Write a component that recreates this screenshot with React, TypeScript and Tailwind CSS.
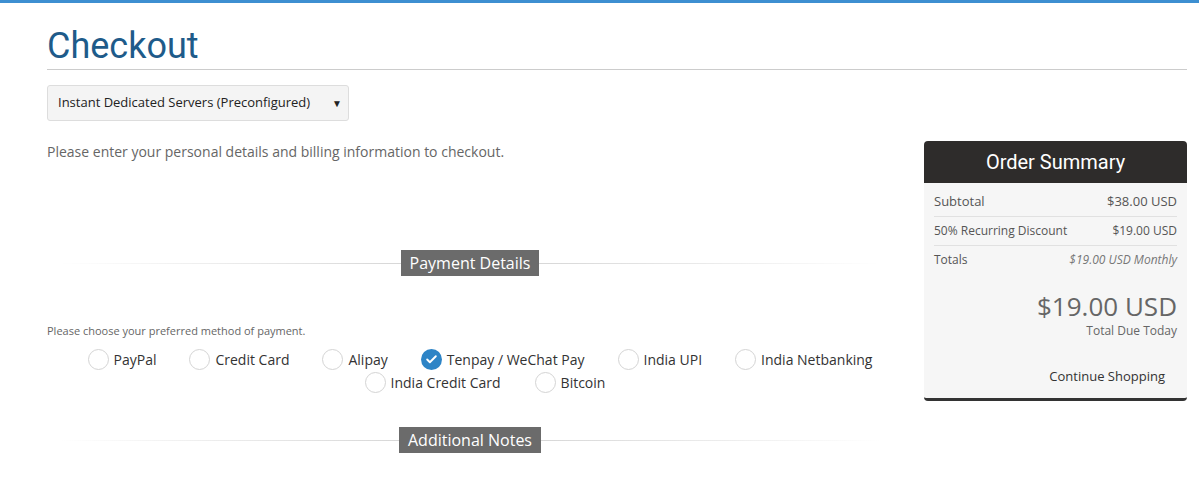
import { Check } from "lucide-react"

type Method = {
    label: string,
    checked?: boolean,
}

const rowOne: Method[] = [
    { label: "PayPal" },
    { label: "Credit Card" },
    { label: "Alipay" },
    { label: "Tenpay / WeChat Pay", checked: true },
    { label: "India UPI" },
    { label: "India Netbanking" },
]

const rowTwo: Method[] = [
    { label: "India Credit Card" },
    { label: "Bitcoin" },
]

const SectionTitle = ({ title }: { title: string }) => (
    <div className="relative flex justify-center">
        <div className="absolute left-[12px] right-[12px] top-1/2 h-px bg-gradient-to-r from-transparent via-[#cfcfcf] to-transparent" />
        <span className="relative bg-[#6b6b6b] text-white text-[16px] leading-[26px] px-[9px]">{title}</span>
    </div>
)

const Radio = ({ checked }: { checked?: boolean }) =>
    checked ? (
        <span className="w-[21px] h-[21px] rounded-full bg-[#2d84c6] flex items-center justify-center">
            <Check size={13} strokeWidth={3.5} className="text-white" />
        </span>
    ) : (
        <span className="w-[21px] h-[21px] rounded-full border border-[#d4d4d4] bg-white" />
    )

const MethodRow = ({ items, className }: { items: Method[], className: string }) => (
    <div className={className}>
        {items.map((m, i) => (
            <label key={i} className="flex items-center gap-[5px] h-[23px] text-[14px] text-[#333]">
                <Radio checked={m.checked} />
                <span>{m.label}</span>
            </label>
        ))}
    </div>
)

export default function App() {
    return (
        <div className="min-h-[490px] bg-white text-[#333] font-['Open_Sans',sans-serif]">
            <div className="h-[3px] bg-[#3d8fd1]" />
            <div className="ml-[47px] mr-[12px]">
                <h1 className="font-['Roboto',sans-serif] text-[36px] leading-[44px] text-[#1e5b8a] pt-[21px] pb-[1px] border-b border-[#cccccc]">
                    Checkout
                </h1>

                <div className="flex">
                    <div className="flex-1 pr-[31px]">
                        <div className="mt-[15px] w-[302px] h-[36px] bg-[#f4f4f4] border border-[#dddddd] rounded-[3px] flex items-center justify-between pl-[10px] pr-[6px] text-[13px] text-[#222]">
                            <span>Instant Dedicated Servers (Preconfigured)</span>
                            <span className="text-[10px]">▼</span>
                        </div>

                        <p className="mt-[21px] text-[14px] leading-[20px] text-[#666]">
                            Please enter your personal details and billing information to checkout.
                        </p>

                        <div className="mt-[88px]">
                            <SectionTitle title="Payment Details" />
                        </div>

                        <p className="mt-[47px] text-[11px] leading-[16px] text-[#666]">
                            Please choose your preferred method of payment.
                        </p>

                        <div className="mt-[9px] flex flex-col">
                            <MethodRow items={rowOne} className="pl-[20px] flex justify-center gap-x-[33px]" />
                            <MethodRow items={rowTwo} className="pl-[30px] flex justify-center gap-x-[34px]" />
                        </div>

                        <div className="mt-[33px]">
                            <SectionTitle title="Additional Notes" />
                        </div>
                    </div>

                    <div className="w-[263px] mt-[71px]">
                        <div className="bg-[#2e2c2b] rounded-t-[4px] h-[42px] flex items-center justify-center">
                            <span className="font-['Roboto',sans-serif] text-white text-[20px]">Order Summary</span>
                        </div>
                        <div className="bg-[#f6f6f6] border-b-[3px] border-[#333] rounded-b-[4px] px-[10px] pt-[5px] pb-[13px] text-[#555]">
                            <div className="flex justify-between items-center h-[29px] text-[13px] border-b border-[#e1e1e1]">
                                <span>Subtotal</span>
                                <span>$38.00 USD</span>
                            </div>
                            <div className="flex justify-between items-center h-[29px] text-[12px] border-b border-[#e1e1e1]">
                                <span>50% Recurring Discount</span>
                                <span>$19.00 USD</span>
                            </div>
                            <div className="flex justify-between items-center h-[28px] text-[12px]">
                                <span>Totals</span>
                                <span className="italic text-[#777]">$19.00 USD Monthly</span>
                            </div>
                            <div className="text-right mt-[16px]">
                                <div className="text-[26px] leading-[32px] text-[#666]">$19.00 USD</div>
                                <div className="text-[12px] leading-[18px] text-[#666]">Total Due Today</div>
                            </div>
                            <div className="text-right mt-[27px] pr-[12px] text-[13px] leading-[18px] text-[#333]">
                                Continue Shopping
                            </div>
                        </div>
                    </div>
                </div>
            </div>
        </div>
    )
}
